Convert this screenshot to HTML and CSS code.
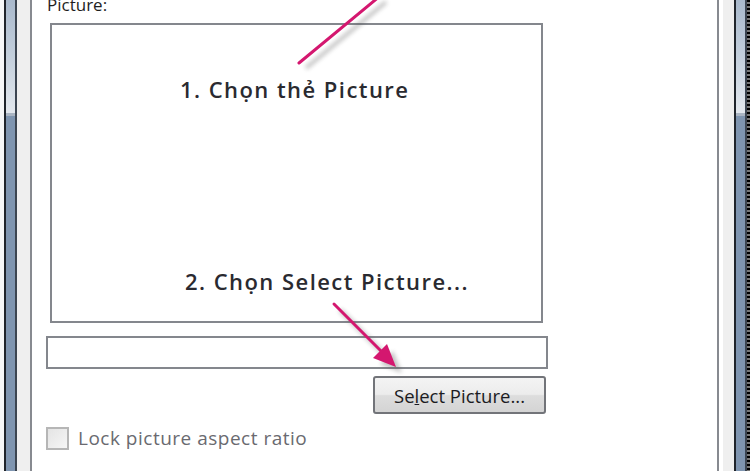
FILE: index.html
```html
<!DOCTYPE html>
<html>
<head>
<meta charset="utf-8">
<link rel="stylesheet" href="styles.css">
</head>
<body>
<div class="frame">
  <div class="edge edge-left">
    <div class="e-white"></div>
    <div class="e-dark"></div>
    <div class="e-bar"><div class="bar-top"></div><div class="bar-bottom"></div></div>
    <div class="e-dark2"></div>
    <div class="e-gray"></div>
    <div class="e-border"></div>
  </div>
  <div class="panel">
    <div class="label">Picture:</div>
    <div class="picbox">
      <div class="note note1">1. Chọn thẻ Picture</div>
      <div class="note note2">2. Chọn Select Picture...</div>
    </div>
    <div class="pathbox"></div>
    <div class="btnrow">
      <button class="btn">Se<u>l</u>ect Picture...</button>
    </div>
    <div class="checkrow">
      <span class="check"></span>
      <span class="checklabel">Lock picture aspect ratio</span>
    </div>
  </div>
  <div class="edge edge-right">
    <div class="e-border"></div>
    <div class="e-white2"></div>
    <div class="e-gray2"></div>
    <div class="e-dark"></div>
    <div class="e-bar"><div class="bar-top"></div><div class="bar-bottom"></div></div>
    <div class="e-dark2"></div>
    <div class="e-dash"></div>
  </div>
  <svg class="arrows" width="750" height="471" viewBox="0 0 750 471">
    <defs>
      <filter id="sh" x="-20%" y="-20%" width="140%" height="140%">
        <feGaussianBlur stdDeviation="2.2"/>
      </filter>
    </defs>
    <g opacity="0.35" filter="url(#sh)" transform="translate(6,6)">
      <line x1="380" y1="-4" x2="300" y2="62" stroke="#555" stroke-width="4"/>
      <line x1="334" y1="304" x2="386" y2="356" stroke="#555" stroke-width="4"/>
      <polygon points="396,367 374,358 387,345" fill="#555"/>
    </g>
    <line x1="380" y1="-4" x2="299" y2="63" stroke="#d4176f" stroke-width="3" stroke-linecap="round"/>
    <line x1="334" y1="304" x2="384" y2="354" stroke="#d4176f" stroke-width="3" stroke-linecap="round"/>
    <polygon points="396,367 373,358 387,344" fill="#d4176f"/>
  </svg>
</div>
</body>
</html>
```

FILE: styles.css
```css
html, body {
  margin: 0;
  padding: 0;
  background: #ffffff;
}
.frame {
  position: relative;
  width: 750px;
  height: 471px;
  overflow: hidden;
  display: flex;
  font-family: "Open Sans", "Noto Sans", sans-serif;
}
.edge {
  display: flex;
  height: 471px;
  flex: none;
}
.edge-left { width: 32px; }
.edge-right { width: 33px; }
.e-white { width: 4px; background: #f6f7f8; }
.e-dark { width: 2px; background: #1f242b; }
.e-bar { width: 9px; display: flex; flex-direction: column; }
.bar-top {
  height: 113px;
  background: linear-gradient(#a9b9cc, #c3cfdc 50%, #e3e8ee);
  border-bottom: 3px solid #aab5c3;
}
.bar-bottom { flex: 1; background: #7f95b0; }
.e-dark2 { width: 2px; background: #3c4551; }
.e-gray { width: 13px; background: #efefef; }
.e-border { width: 2px; background: #878a90; }
.e-white2 { width: 4px; background: #ffffff; }
.e-gray2 { width: 11px; background: #efefef; }
.e-dash {
  width: 3px;
  background: repeating-linear-gradient(#000 0 2px, #777 2px 4px);
}
.panel {
  flex: 1;
  display: flex;
  flex-direction: column;
  background: #ffffff;
}
.label {
  margin: -6px 0 0 15px;
  height: 27px;
  font-size: 17px;
  line-height: 22px;
  color: #1e1e1e;
}
.picbox {
  margin: 2px 0 0 18px;
  width: 489px;
  height: 296px;
  border: 2px solid #84878d;
  display: flex;
  flex-direction: column;
  align-items: flex-start;
}
.note {
  font-family: "Open Sans", sans-serif;
  font-weight: 600;
  font-size: 22px;
  color: #2a2a30;
  line-height: 28px;
  letter-spacing: 1.45px;
  white-space: nowrap;
}
.note1 { margin: 50px 0 0 128px; }
.note2 { margin: 164px 0 0 133px; }
.pathbox {
  margin: 13px 0 0 14px;
  width: 498px;
  height: 29px;
  border: 2px solid #84878d;
}
.btnrow {
  display: flex;
  justify-content: flex-end;
  padding-right: 171px;
  margin-top: 7px;
}
.btn {
  width: 173px;
  height: 38px;
  border: 2px solid #727479;
  border-radius: 3px;
  background: linear-gradient(#f4f4f4, #ececec 48%, #dddddd 52%, #d4d4d4);
  font-family: "Open Sans", sans-serif;
  font-size: 18.5px;
  color: #1b1b22;
  padding: 0;
}
.checkrow {
  display: flex;
  align-items: center;
  margin: 11px 0 0 14px;
  gap: 9px;
}
.check {
  width: 19px;
  height: 19px;
  border: 2px solid #b6b6b6;
  background: linear-gradient(135deg, #e4e4e4, #f6f6f6);
}
.checklabel {
  font-size: 19px;
  letter-spacing: 0.5px;
  color: #6a6a70;
}
.arrows {
  position: absolute;
  left: 0;
  top: 0;
  pointer-events: none;
}
```
